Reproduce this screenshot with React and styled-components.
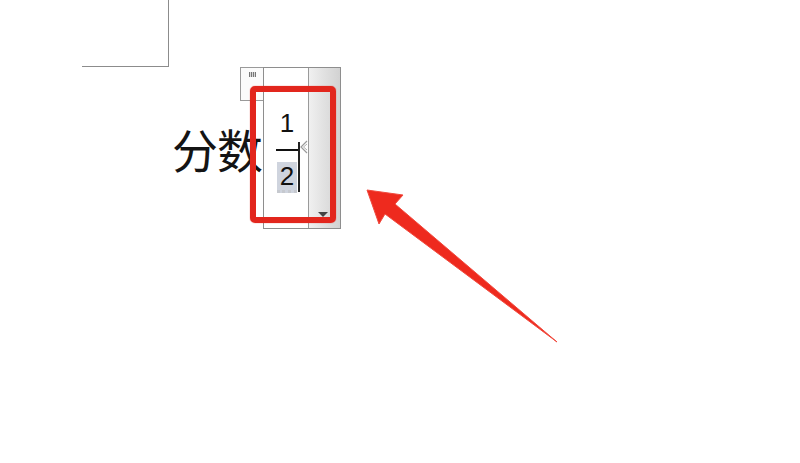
import React from "react";
import styled, { createGlobalStyle } from "styled-components";

const Global = createGlobalStyle`
  html, body { margin: 0; padding: 0; background: #fff; }
  body { font-family: "Noto Sans", "Noto Sans CJK SC", sans-serif; }
`;

const Canvas = styled.div`
  position: relative;
  width: 800px;
  height: 463px;
  overflow: hidden;
  background: #fff;
`;

const PageCorner = styled.div`
  margin-left: 82px;
  width: 86px;
  height: 66px;
  border-right: 1.5px solid #8c8c8c;
  border-bottom: 1.5px solid #8c8c8c;
`;

const FormulaRow = styled.div`
  display: flex;
  align-items: flex-start;
  margin-left: 172px;
`;

const Label = styled.span`
  margin-top: 57px;
  font-family: "Noto Sans CJK SC", "Noto Sans", sans-serif;
  font-size: 46px;
  line-height: 48px;
  color: #141414;
  letter-spacing: -1px;
`;

const Editor = styled.div`
  position: relative;
  display: grid;
  grid-template-columns: 45px 31px;
  width: 76px;
  height: 160px;
  margin-left: 1px;
  border: 1px solid #8e8e8e;
  background: #fff;
`;

const Tab = styled.div`
  position: absolute;
  left: -24px;
  top: -1px;
  width: 23px;
  height: 34px;
  border: 1px solid #9a9a9a;
  border-right: none;
  background: #fbfbfb;
  display: flex;
  justify-content: center;
  padding-top: 4px;
  box-sizing: border-box;
`;

const Grip = styled.div`
  width: 7px;
  height: 5px;
  background: repeating-linear-gradient(90deg, #777 0 1px, #d8d8d8 1px 2px);
`;

const Content = styled.div`
  display: flex;
  align-items: flex-start;
  justify-content: center;
  border-right: 1px solid #9a9a9a;
  padding-top: 41px;
`;

const Fraction = styled.div`
  position: relative;
  display: flex;
  flex-direction: column;
  align-items: center;
  width: 23px;
  margin-left: 2px;
  font-family: "Liberation Sans", "Noto Sans", sans-serif;
  font-size: 26px;
  line-height: 28px;
  color: #111;
`;

const Num = styled.span`
  padding-bottom: 12px;
`;

const Bar = styled.div`
  width: 23px;
  height: 2px;
  background: #111;
`;

const Den = styled.span`
  margin-top: 11px;
  padding: 0 3px;
  background: #cfd4de;
  border-bottom: 3px dotted #c6c9cf;
`;

const Caret = styled.div`
  position: absolute;
  right: -1px;
  top: 33px;
  width: 2px;
  height: 50px;
  background: #222;
`;

const Chevron = styled.svg`
  position: absolute;
  right: -9px;
  top: 31px;
`;

const Scroll = styled.div`
  position: relative;
  background: linear-gradient(90deg, #f0f0f0 0%, #e2e2e2 45%, #d2d2d2 100%);
`;

const ScrollArrow = styled.div`
  position: absolute;
  right: 12px;
  bottom: 11px;
  width: 0;
  height: 0;
  border-left: 5px solid transparent;
  border-right: 5px solid transparent;
  border-top: 5px solid #444;
`;

const Highlight = styled.div`
  position: absolute;
  left: 250px;
  top: 86px;
  width: 86px;
  height: 137px;
  box-sizing: border-box;
  border: 6px solid #e2261d;
  border-radius: 5px;
  box-shadow: 0 0 1px #e2261d;
`;

const ArrowLayer = styled.svg`
  position: absolute;
  left: 0;
  top: 0;
  pointer-events: none;
`;

export default function App() {
  return (
    <>
      <Global />
      <Canvas>
        <PageCorner />
        <FormulaRow>
          <Label>分数</Label>
          <Editor>
            <Tab>
              <Grip />
            </Tab>
            <Content>
              <Fraction>
                <Num>1</Num>
                <Bar />
                <Den>2</Den>
                <Caret />
                <Chevron width="8" height="14" viewBox="0 0 8 14">
                  <path d="M7 1 L1 7 L7 13" fill="none" stroke="#9a9a9a" strokeWidth="1.2" />
                  <path d="M7 4 L3.5 7 L7 10" fill="none" stroke="#b0b0b0" strokeWidth="1" />
                </Chevron>
              </Fraction>
            </Content>
            <Scroll>
              <ScrollArrow />
            </Scroll>
          </Editor>
        </FormulaRow>
        <Highlight />
        <ArrowLayer width="800" height="463" viewBox="0 0 800 463">
          <polygon
            points="367,190 403,195 395,204 557,342 385,214 379,224"
            fill="#ee2a1e"
            stroke="#f04a3e"
            strokeWidth="1"
            strokeLinejoin="round"
          />
        </ArrowLayer>
      </Canvas>
    </>
  );
}
